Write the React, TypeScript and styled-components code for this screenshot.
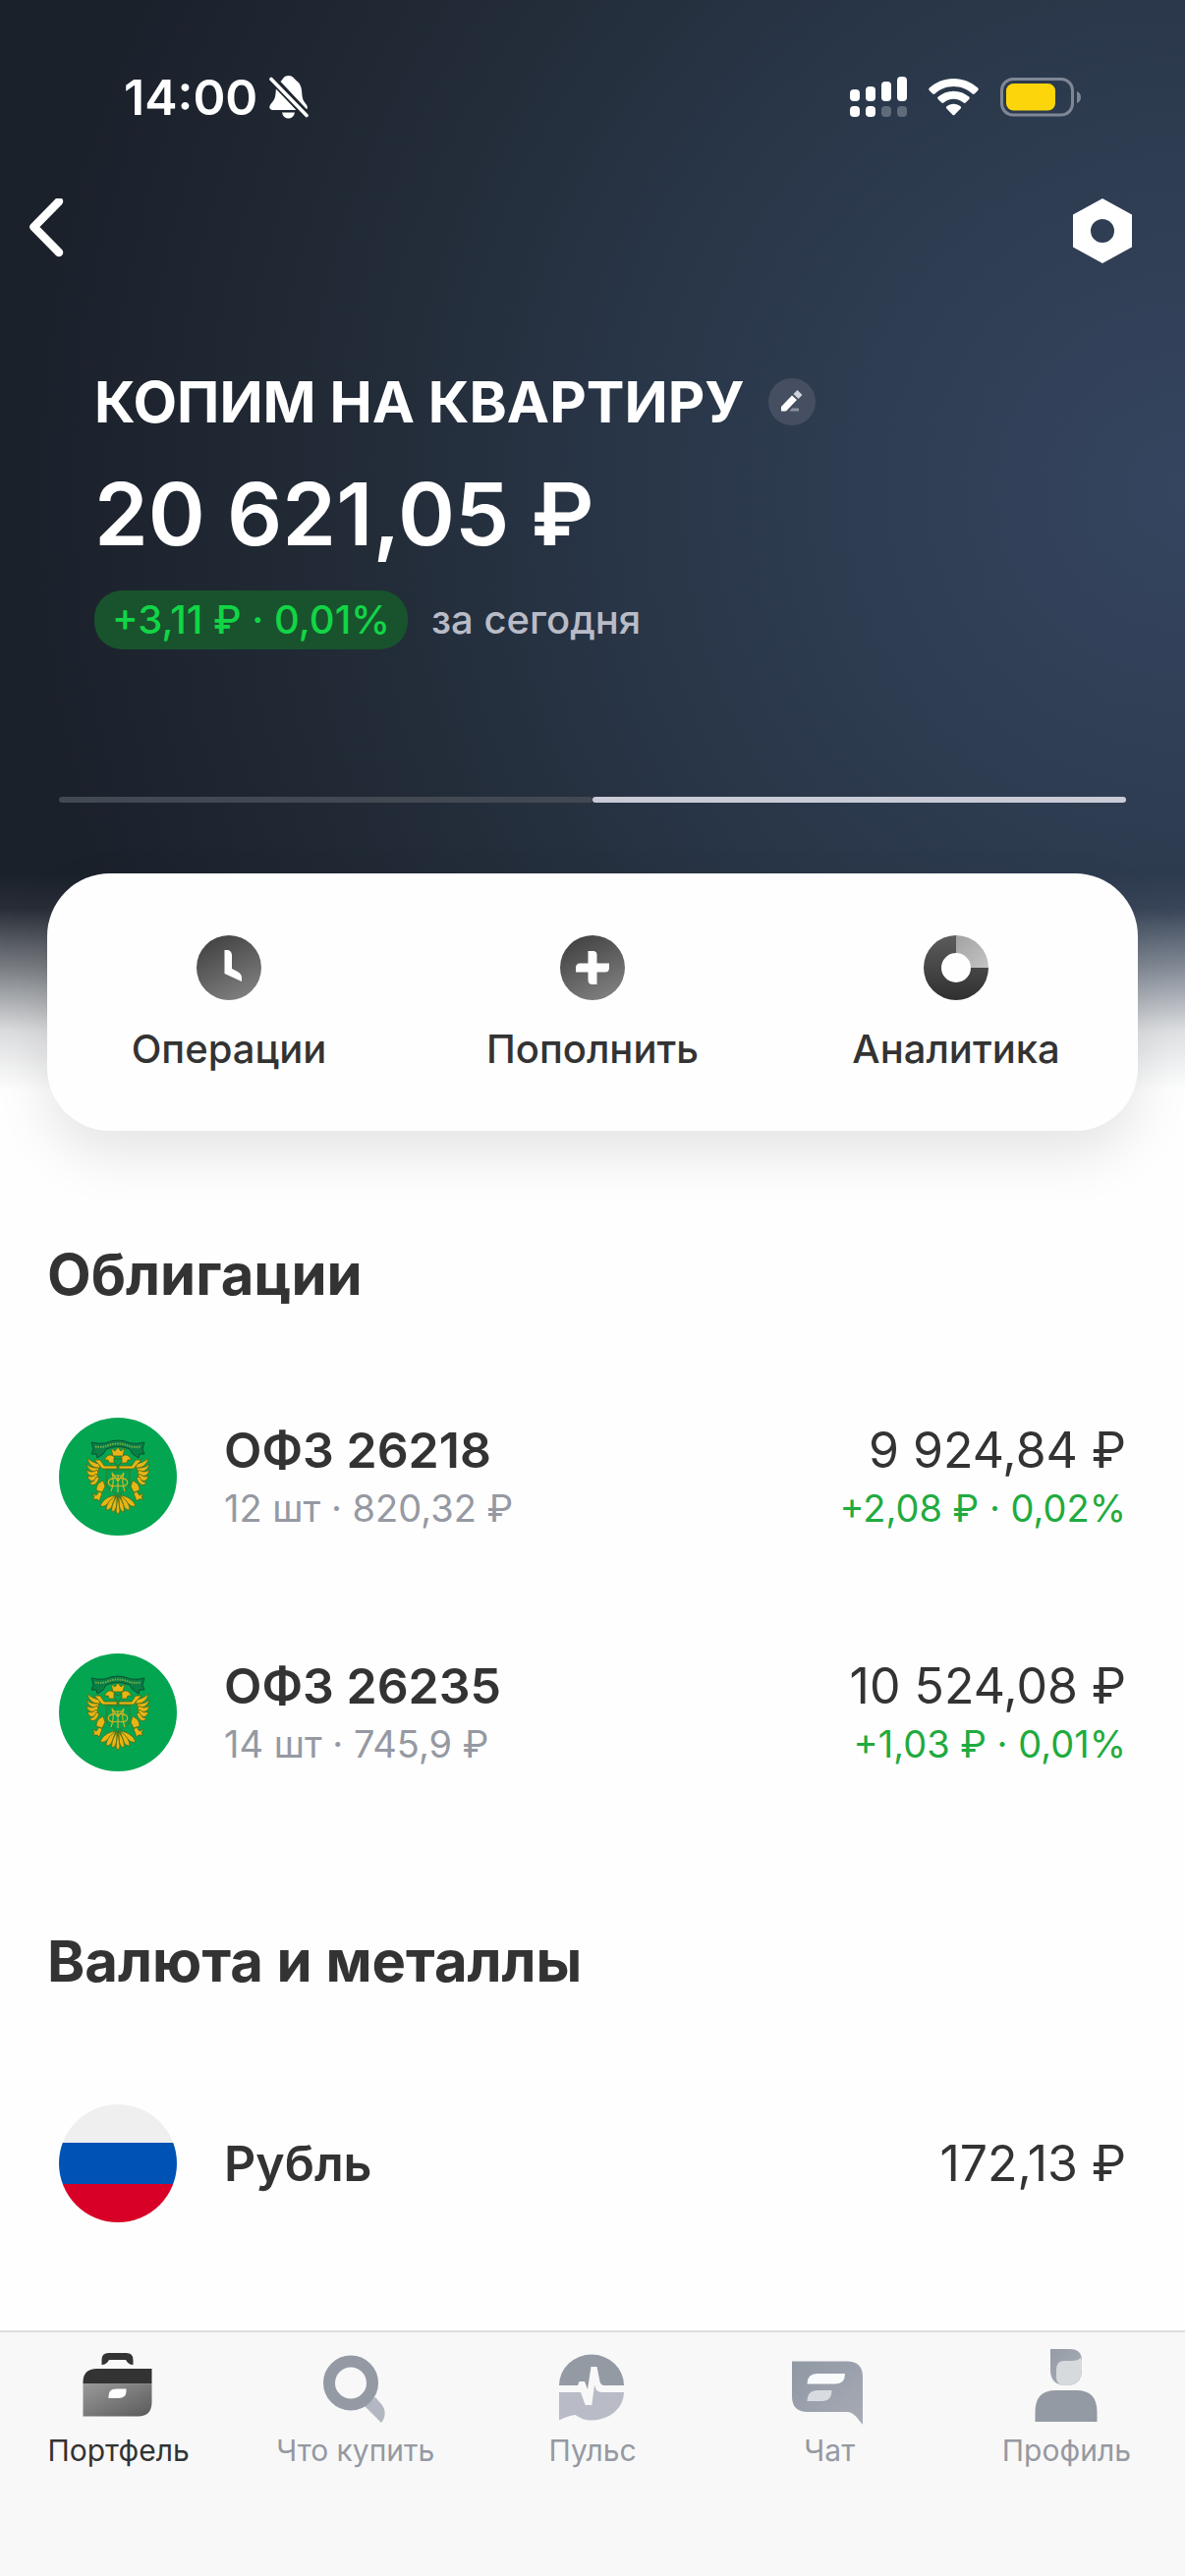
import React from "react";
import styled, { createGlobalStyle } from "styled-components";

const GlobalStyle = createGlobalStyle`
  *, *::before, *::after { box-sizing: border-box; }
  body {
    margin: 0;
    background: #fefefe;
    color: #333;
    font-family: Inter, "Noto Sans", sans-serif;
  }
  ul { margin: 0; padding: 0; list-style: none; }
  button { border: 0; padding: 0; background: none; color: inherit; font: inherit; cursor: pointer; }
  svg { display: block; flex: none; }
`;

const Screen = styled.div`
  min-height: 100vh;
  display: flex;
  flex-direction: column;
`;

const Hero = styled.header`
  display: flex;
  flex-direction: column;
  padding-top: 69px;
  color: #fff;
  background:
    linear-gradient(to bottom, rgba(254, 254, 254, 0) 890px, rgba(254, 254, 254, 0.06) 925px, rgba(254, 254, 254, 0.42) 985px, rgba(254, 254, 254, 0.85) 1050px, #fefefe 1110px),
    radial-gradient(circle 1180px at 100% 500px, #35455f 0%, #303e54 24%, #293648 48%, #222b37 72%, #1b212b 100%);
`;

const StatusBar = styled.div`
  display: flex;
  align-items: center;
  justify-content: space-between;
  height: 60px;
  padding: 0 106px 0 126px;
`;

const StatusGroup = styled.div<{ $gap: number }>`
  display: flex;
  align-items: center;
  gap: ${(p) => p.$gap}px;
`;

const Clock = styled.time`
  font-size: 50px;
  line-height: 60px;
  font-weight: 600;
`;

const NavBar = styled.nav`
  display: flex;
  align-items: center;
  justify-content: space-between;
  margin-top: 73px;
  padding: 0 54px 0 20px;
`;

const Summary = styled.section`
  margin-top: 105px;
  padding: 0 96px;
`;

const TitleRow = styled.div`
  display: flex;
  align-items: center;
  gap: 24px;
`;

const Title = styled.h1`
  margin: 0;
  font-size: 58px;
  line-height: 72px;
  font-weight: 700;
`;

const EditButton = styled.button`
  display: grid;
  place-items: center;
  width: 48px;
  height: 48px;
  border-radius: 50%;
  background: #454f61;
`;

const Balance = styled.p`
  margin: 24px 0;
  font-size: 88px;
  line-height: 108px;
  font-weight: 600;
`;

const ChangeRow = styled.div`
  display: flex;
  align-items: center;
  gap: 24px;
  font-size: 40px;
  line-height: 60px;
  font-weight: 500;
  color: #b9bcc7;
`;

const ChangeBadge = styled.span`
  padding: 0 18px;
  border-radius: 28px;
  background: #18532d;
  color: #12d546;
`;

const Pager = styled.div`
  display: flex;
  margin: 150px 60px 0;
`;

const PagerBar = styled.span<{ $active?: boolean }>`
  flex: 1;
  height: 6px;
  border-radius: 3px;
  background: ${(p) => (p.$active ? "#c9cbd6" : "#434953")};
`;

const ActionCard = styled.div`
  display: grid;
  grid-template-columns: repeat(3, 1fr);
  margin: 72px 48px 0;
  padding: 63px 0 59px;
  border-radius: 64px;
  background: #fefefe;
  box-shadow: 0 24px 56px rgba(0, 0, 0, 0.1);
  color: #333;
`;

const Action = styled.button`
  display: flex;
  flex-direction: column;
  align-items: center;
  gap: 26px;
`;

const ActionLabel = styled.span`
  font-size: 40px;
  line-height: 48px;
  font-weight: 500;
`;

const Main = styled.main`
  flex: 1;
  padding: 13px 0 50px;
`;

const Section = styled.section`
  margin-top: 97px;
`;

const SectionTitle = styled.h2`
  margin: 0 0 50px;
  padding: 0 48px;
  font-size: 58px;
  line-height: 72px;
  font-weight: 700;
`;

const AssetRow = styled.li`
  display: flex;
  align-items: center;
  gap: 48px;
  height: 240px;
  padding: 0 60px;
`;

const AssetText = styled.div<{ $end?: boolean }>`
  display: flex;
  flex-direction: column;
  gap: 4px;
  ${(p) => (p.$end ? "margin-left: auto; align-items: flex-end;" : "")}
`;

const AssetMain = styled.span<{ $strong?: boolean }>`
  font-size: 50px;
  line-height: 60px;
  font-weight: ${(p) => (p.$strong ? 600 : 400)};
`;

const AssetSub = styled.span<{ $gain?: boolean }>`
  font-size: 38px;
  line-height: 50px;
  color: ${(p) => (p.$gain ? "#1fab40" : "#9599a2")};
`;

const TabBar = styled.nav`
  display: grid;
  grid-template-columns: repeat(5, 1fr);
  padding: 16px 0 110px;
  border-top: 2px solid #dededf;
  background: #f8f8f8;
`;

const Tab = styled.a<{ $active?: boolean }>`
  display: flex;
  flex-direction: column;
  align-items: center;
  gap: 6px;
  font-size: 30px;
  line-height: 36px;
  text-decoration: none;
  color: ${(p) => (p.$active ? "#333" : "#9599a2")};
`;

const BellOff = () => (
  <svg width="40" height="44" viewBox="0 0 40 44" fill="#fff" aria-hidden="true">
    <path d="M12 5.500C14 4 14.500 0 19.500 0s6 3.500 8 5c4.500 3 5.500 7.500 5.800 13 .3 6 1.700 8 4.200 11 1.500 1.800 1.800 4 .6 5.200L11.500 6z" />
    <path d="M7 12.500 27.500 35H3.500C0 35 -.5 31.500 1.500 29c3-3.500 4.700-6 5-10.500z" />
    <path d="M13 37.500h13c-.8 4-3.300 6-6.500 6s-5.700-2-6.500-6z" />
    <path d="M2 3.500 38 40.500" stroke="#1d242e" strokeWidth="7" />
    <path d="M2 3.500 38 40.500" stroke="#fff" strokeWidth="3.600" strokeLinecap="round" />
  </svg>
);

const Signal = () => (
  <svg width="58" height="42" viewBox="0 0 58 42" fill="#fff" aria-hidden="true">
    <rect x="0" y="13" width="10" height="12" rx="4" />
    <rect x="16" y="10" width="10" height="15" rx="4" />
    <rect x="32" y="5" width="10" height="20" rx="4" />
    <rect x="48" y="0" width="10" height="25" rx="4" />
    <rect x="0" y="30" width="10" height="11" rx="4" />
    <rect x="16" y="30" width="10" height="11" rx="4" />
    <rect x="32" y="30" width="10" height="11" rx="4" opacity=".25" />
    <rect x="48" y="30" width="10" height="11" rx="4" opacity=".25" />
  </svg>
);

const Wifi = () => (
  <svg width="51" height="38" viewBox="0 0 51 38" fill="#fff" aria-hidden="true">
    <path d="M25.500 0C16 0 7.300 3.500 .8 9.600c-.7.700-.7 1.600-.1 2.300l3.500 3.500c.6.600 1.500.6 2.200 0C11.600 10.700 18.200 8 25.500 8s13.900 2.700 19.100 7.400c.7.600 1.600.6 2.200 0l3.500-3.500c.6-.7.6-1.600-.1-2.300C43.700 3.500 35 0 25.500 0z" />
    <path d="M25.500 12.700c-6 0-11.500 2.200-15.700 5.900-.8.700-.8 1.600-.1 2.300l3.600 3.600c.6.600 1.400.6 2.100.1 2.800-2.400 6.300-3.800 10.100-3.800s7.300 1.400 10.100 3.800c.7.500 1.500.5 2.100-.1l3.600-3.600c.7-.7.7-1.600-.1-2.300-4.200-3.700-9.700-5.900-15.700-5.900z" />
    <path d="M25.500 25.800c-2.700 0-5.100.9-7 2.500-.8.700-.8 1.600-.1 2.300l6 6.200c.6.700 1.600.7 2.200 0l6-6.200c.7-.7.7-1.600-.1-2.300-1.900-1.600-4.300-2.500-7-2.500z" />
  </svg>
);

const Battery = () => (
  <svg width="82" height="40" viewBox="0 0 82 40" aria-hidden="true">
    <rect x="1.500" y="1.500" width="72" height="36.500" rx="11.500" fill="none" stroke="#7f8795" strokeWidth="3" />
    <rect x="6" y="6" width="50" height="27.500" rx="7.500" fill="#fcd60a" />
    <path d="M78 14c2.600 1 4 3.200 4 6s-1.400 5-4 6z" fill="#7f8795" />
  </svg>
);

const ChevronLeft = () => (
  <svg width="54" height="66" viewBox="0 0 54 66" fill="none" aria-hidden="true">
    <path d="M40 3 14.500 29 40 55" stroke="#fff" strokeWidth="8.500" strokeLinecap="round" strokeLinejoin="round" />
  </svg>
);

const Nut = () => (
  <svg width="60" height="66" viewBox="0 0 60 66" fill="#fff" aria-hidden="true">
    <path fillRule="evenodd" d="M30 0 60 16.500v33L30 66 0 49.500v-33zM30 21a12 12 0 1 0 0 24 12 12 0 0 0 0-24z" />
  </svg>
);

const Pencil = () => (
  <svg width="24" height="24" viewBox="0 0 24 24" aria-hidden="true">
    <path d="M1 17 12 5.500 17 10 6 21.500H1z" fill="#fff" />
    <path d="M13.500 4 17.500 0l5 5-4 4z" fill="#cfd2da" />
    <path d="M9.500 21.500 12 18.500h7v3z" fill="#8b92a0" />
  </svg>
);

const Gradient = ({ id, from, to, x1 = 0, x2 = 1 }: { id: string; from: string; to: string; x1?: number; x2?: number }) => (
  <linearGradient id={id} x1={x1} y1="0" x2={x2} y2="1">
    <stop offset="0" stopColor={from} />
    <stop offset="1" stopColor={to} />
  </linearGradient>
);

const ClockIcon = () => (
  <svg width="66" height="66" viewBox="0 0 66 66" aria-hidden="true">
    <defs><Gradient id="clock" from="#404040" to="#808080" x1={0.2} x2={0.7} /></defs>
    <circle cx="33" cy="33" r="33" fill="url(#clock)" />
    <path d="M28.500 15h2c3.500 0 5.500 2 5.500 5.500V34l5 2.500c3.500 1.800 5 4 5 6.500v4L28.500 39z" fill="#fff" />
  </svg>
);

const PlusIcon = () => (
  <svg width="66" height="66" viewBox="0 0 66 66" aria-hidden="true">
    <defs><Gradient id="plus" from="#404040" to="#808080" x1={0.2} x2={0.7} /></defs>
    <circle cx="33" cy="33" r="33" fill="url(#plus)" />
    <path d="M28.500 16h5q4 0 4 4v8.500H50V33q0 4.500-4.500 4.500h-8V50H33q-4.500 0-4.500-4.500v-8H16V33q0-4.500 4.500-4.500h8z" fill="#fff" />
  </svg>
);

const DonutIcon = () => (
  <svg width="66" height="66" viewBox="0 0 66 66" aria-hidden="true">
    <defs>
      <Gradient id="donutDark" from="#5c5c5c" to="#303030" x1={0} x2={0} />
      <Gradient id="donutLight" from="#a2a2a2" to="#c4c4c4" />
    </defs>
    <path d="M33 0v18a15 15 0 1 0 15 15h18A33 33 0 1 1 33 0z" fill="url(#donutDark)" />
    <path d="M33 0a33 33 0 0 1 33 33H48a15 15 0 0 0-15-15z" fill="url(#donutLight)" />
  </svg>
);

const WING_FEATHERS = [
  "M42 51C36 52 30 48 29 41c4 4 8 5 12 6z",
  "M41 54C35 57 29 53 28 47c4 4 8 4 12 4z",
  "M40 57C35 61 29 60 28 53c4 3 8 2 11 0z",
  "M40 60C36 66 30 66 29 59c4 2 7 0 9-2z",
  "M41 61C39 68 34 71 31 66c4 0 6-3 7-6z",
];

const TAIL_FEATHERS = [
  "M57 79C50 80 44 84 42 90c4 1 6-1 8-3 3-2 6-4 7-8z",
  "M58 79C52 83 48 88 48 94c5 0 6-4 7-7z",
  "M59 80C55 86 53 91 54 96c5-1 5-8 5-16z",
];

const HalfEagle = () => (
  <g>
    {WING_FEATHERS.map((d) => <path key={d} d={d} />)}
    <path d="M40 47l-4-4 6 0 4 6h13v3H44z" />
    <path d="M57 46c2-6-4-10-8-7l-3 4 4 0 1 3z" />
    <path d="M45 64c-4 2-7 4-7 10l6 2 3-6z" />
    <path d="M41 75l-3 4-4-2 2 4-2 2 5 0 2 2 3-8z" />
    {TAIL_FEATHERS.map((d) => <path key={d} d={d} />)}
  </g>
);

const MinistryEmblem = () => (
  <svg width="120" height="120" viewBox="0 0 120 120" role="img" aria-label="Эмблема эмитента">
    <circle cx="60" cy="60" r="60" fill="#04a551" />
    <path d="M33 25q7 2 14 1 13-6 26 0 7 1 14-1l-2 7 2 5h-5l-1 4-6-4-3-5q-12-5-24 0l-3 5-6 4-1-4h-5l2-5z" fill="#087f45" stroke="#0b5133" strokeWidth="1" />
    <path d="M37 29.500q6 1 11-.5 12-5 24 0 5 1.500 11 .5" fill="none" stroke="#74ad48" strokeWidth="2" strokeDasharray="1.500 1" />
    <g fill="#e9b515" stroke="#4f6a18" strokeWidth=".8">
      <HalfEagle />
      <g transform="translate(120 0) scale(-1 1)"><HalfEagle /></g>
      <path d="M55 39l-2-8 4 3 3-4 3 4 4-3-2 8z" />
      <path d="M60 79l2 16-2 4-2-4z" />
    </g>
    <path d="M56 41q4 3 8 0v4l-4 4-4-4z" fill="#04a551" stroke="#41651b" strokeWidth=".8" />
    <path d="M48 53h24v14c0 6-6 8-12 12-6-4-12-6-12-12z" fill="#04a04f" stroke="#3d7a22" strokeWidth="1" />
    <path d="M54 56q3 9-1 19M66 56q-3 9 1 19M60 58v18M54 56l6 9 6-9M56 59h8M60 62c-13-3-13 11 0 7 13 4 13-10 0-7z" fill="none" stroke="#d3b522" strokeWidth="1.200" />
  </svg>
);

const RussianFlag = () => (
  <svg width="120" height="120" viewBox="0 0 120 120" role="img" aria-label="Флаг России">
    <defs><clipPath id="flagClip"><circle cx="60" cy="60" r="60" /></clipPath></defs>
    <g clipPath="url(#flagClip)">
      <rect width="120" height="40" fill="#efefef" />
      <rect y="39" width="120" height="42" fill="#0052b4" />
      <rect y="81" width="120" height="39" fill="#d80027" />
    </g>
  </svg>
);

const PortfolioIcon = () => (
  <svg width="80" height="80" viewBox="0 0 80 80" aria-hidden="true">
    <defs><Gradient id="case" from="#9a9a9a" to="#5a5a5a" /></defs>
    <path d="M22.500 17v-5q0-7 7-7h18q7 0 7 7v5q-5 0-7.500-5H30q-2.500 5-7.500 5z" fill="#333" />
    <path d="M3.500 36.500V35q0-14 14-14h56v15.500z" fill="#333" />
    <path d="M3.500 36.500h70V55q0 14.500-14 14.500h-56z" fill="url(#case)" />
    <path d="M29.500 51v-2.500q0-7 8-7h10V44q0 7-8 7z" fill="#fff" />
  </svg>
);

const SearchIcon = () => (
  <svg width="80" height="80" viewBox="0 0 80 80" aria-hidden="true">
    <path d="M49 59 60 50l6.500 7.500c4.500 5.500 4 13.500-.5 18.500z" fill="#b3b7c1" />
    <circle cx="35" cy="35.500" r="22" fill="none" stroke="#949aa4" strokeWidth="12" />
  </svg>
);

const PulseIcon = () => (
  <svg width="80" height="80" viewBox="0 0 80 80" aria-hidden="true">
    <path d="M6 38a33 31.500 0 0 1 66 0H52q-3.500 0-4.500-4l-3-15h-6L35 42l-3-8h-5.500L25 38z" fill="#949aa4" />
    <path d="M6 45h22l4.700 13h6.600L42 37.500l1.500 4.500q2 3 6.500 3h22a33 28.500 0 0 1-33 28.500q-9 0-16.500-5.500Q14 69 6 73.500z" fill="#b9bcc6" />
  </svg>
);

const ChatIcon = () => (
  <svg width="80" height="80" viewBox="0 0 80 80" aria-hidden="true">
    <defs><Gradient id="chat" from="#8f98a3" to="#a8abb6" /></defs>
    <path d="M2 13.500h56q16 0 16 16V78c-5-6-9-13-16-13H18Q2 65 2 49z" fill="url(#chat)" />
    <path d="M17.500 36.500q0-10.500 10-10.500H56q0 10.500-10 10.500z" fill="#fafbfc" />
    <path d="M17.500 54q0-11 11-11h14q0 11-10 11z" fill="#d8dce0" />
  </svg>
);

const ProfileIcon = () => (
  <svg width="80" height="80" viewBox="0 0 80 80" aria-hidden="true">
    <defs><Gradient id="hair" from="#949ba6" to="#a9b0b8" /></defs>
    <path d="M24 1h20q12 0 12 12v9q0 16-16 16T24 22z" fill="url(#hair)" />
    <path d="M55 9.500 56 13v9c0 10-6 16-16 16-6 0-10-2-10-9v-7q0-9 8-9h8q6 0 9-3.500z" fill="#d6dadd" />
    <path d="M8.500 75V65q0-22 21-22h21q21 0 21 22v10z" fill="#949aa4" />
  </svg>
);

const actions = [
  { label: "Операции", Icon: ClockIcon },
  { label: "Пополнить", Icon: PlusIcon },
  { label: "Аналитика", Icon: DonutIcon },
];

const bonds = [
  { name: "ОФЗ 26218", holding: "12 шт · 820,32 ₽", amount: "9 924,84 ₽", change: "+2,08 ₽ · 0,02%" },
  { name: "ОФЗ 26235", holding: "14 шт · 745,9 ₽", amount: "10 524,08 ₽", change: "+1,03 ₽ · 0,01%" },
];

const tabs = [
  { label: "Портфель", Icon: PortfolioIcon, active: true },
  { label: "Что купить", Icon: SearchIcon },
  { label: "Пульс", Icon: PulseIcon },
  { label: "Чат", Icon: ChatIcon },
  { label: "Профиль", Icon: ProfileIcon },
];

export default function App() {
  return (
    <Screen>
      <GlobalStyle />
      <Hero>
        <StatusBar>
          <StatusGroup $gap={12}>
            <Clock>14:00</Clock>
            <BellOff />
          </StatusGroup>
          <StatusGroup $gap={22}>
            <Signal />
            <Wifi />
            <Battery />
          </StatusGroup>
        </StatusBar>
        <NavBar>
          <button type="button" aria-label="Назад"><ChevronLeft /></button>
          <button type="button" aria-label="Настройки"><Nut /></button>
        </NavBar>
        <Summary>
          <TitleRow>
            <Title>КОПИМ НА КВАРТИРУ</Title>
            <EditButton type="button" aria-label="Изменить"><Pencil /></EditButton>
          </TitleRow>
          <Balance>20 621,05 ₽</Balance>
          <ChangeRow>
            <ChangeBadge>+3,11 ₽ · 0,01%</ChangeBadge>
            <span>за сегодня</span>
          </ChangeRow>
        </Summary>
        <Pager>
          <PagerBar />
          <PagerBar $active />
        </Pager>
        <ActionCard>
          {actions.map(({ label, Icon }) => (
            <Action key={label} type="button">
              <Icon />
              <ActionLabel>{label}</ActionLabel>
            </Action>
          ))}
        </ActionCard>
      </Hero>
      <Main>
        <Section>
          <SectionTitle>Облигации</SectionTitle>
          <ul>
            {bonds.map((bond) => (
              <AssetRow key={bond.name}>
                <MinistryEmblem />
                <AssetText>
                  <AssetMain $strong>{bond.name}</AssetMain>
                  <AssetSub>{bond.holding}</AssetSub>
                </AssetText>
                <AssetText $end>
                  <AssetMain>{bond.amount}</AssetMain>
                  <AssetSub $gain>{bond.change}</AssetSub>
                </AssetText>
              </AssetRow>
            ))}
          </ul>
        </Section>
        <Section>
          <SectionTitle>Валюта и металлы</SectionTitle>
          <ul>
            <AssetRow>
              <RussianFlag />
              <AssetText>
                <AssetMain $strong>Рубль</AssetMain>
              </AssetText>
              <AssetText $end>
                <AssetMain>172,13 ₽</AssetMain>
              </AssetText>
            </AssetRow>
          </ul>
        </Section>
      </Main>
      <TabBar>
        {tabs.map(({ label, Icon, active }) => (
          <Tab key={label} href="#" $active={active}>
            <Icon />
            {label}
          </Tab>
        ))}
      </TabBar>
    </Screen>
  );
}
